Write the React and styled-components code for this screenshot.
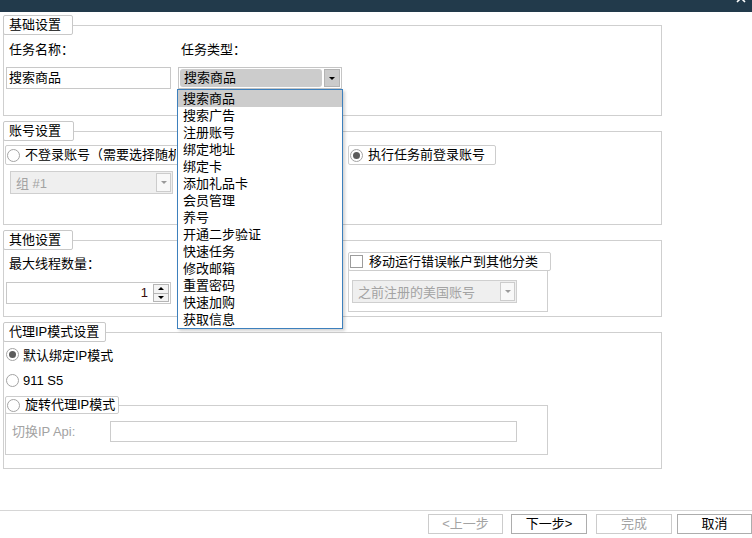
import React from "react";
import styled, { createGlobalStyle } from "styled-components";

const GlobalStyle = createGlobalStyle`
  html, body {
    margin: 0;
    padding: 0;
    background: #fff;
  }
  body {
    font-family: "Liberation Sans", "Noto Sans CJK SC", sans-serif;
    font-size: 13px;
    color: #000;
  }
  * {
    box-sizing: border-box;
  }
`;

const taskTypes = [
  "搜索商品",
  "搜索广告",
  "注册账号",
  "绑定地址",
  "绑定卡",
  "添加礼品卡",
  "会员管理",
  "养号",
  "开通二步验证",
  "快速任务",
  "修改邮箱",
  "重置密码",
  "快速加购",
  "获取信息",
];

function App() {
  return (
    <>
      <GlobalStyle />
      <Window>
        <TitleBar>
          <CloseGlyph width="10" height="12" viewBox="0 0 10 12">
            <path d="M1 1 L9 9 M9 1 L1 9" stroke="#fff" strokeWidth="1.6" />
          </CloseGlyph>
        </TitleBar>

        <Body>
          <Group $h={91} $pad="16px 0 0 2px">
            <Legend>基础设置</Legend>
            <Columns $cols="165px 164px" $gap="7px">
              <div>
                <FieldLabel>任务名称：</FieldLabel>
                <TextBox>搜索商品</TextBox>
              </div>
              <div>
                <FieldLabel>任务类型：</FieldLabel>
                <SelectWrap>
                  <ActiveSelect>
                    <ActiveValue>搜索商品</ActiveValue>
                    <ActiveArrow>
                      <Arrow />
                    </ActiveArrow>
                  </ActiveSelect>
                  <DropList>
                    {taskTypes.map((t, i) => (
                      <DropItem key={t} $active={i === 0}>
                        {t}
                      </DropItem>
                    ))}
                  </DropList>
                </SelectWrap>
              </div>
            </Columns>
          </Group>

          <Group $h={94} $pad="13px 0 0 1px">
            <Legend $pr={12}>账号设置</Legend>
            <Columns $cols="343px auto">
              <div>
                <OptionBox>
                  <Radio />
                  <ClippedText $w={151}>不登录账号（需要选择随机账号）</ClippedText>
                </OptionBox>
                <DisabledSelect $w={163} $mt={6} $ml={5}>
                  <span>组 #1</span>
                  <DisabledArrow>
                    <Arrow $grey />
                  </DisabledArrow>
                </DisabledSelect>
              </div>
              <div>
                <OptionBox>
                  <Radio $checked />
                  执行任务前登录账号
                </OptionBox>
              </div>
            </Columns>
          </Group>

          <Group $h={77} $pad="15px 0 0 2px">
            <Legend>其他设置</Legend>
            <Columns $cols="342px auto">
              <div>
                <FieldLabel $mb={10}>最大线程数量：</FieldLabel>
                <NumberBox>
                  <NumberValue>1</NumberValue>
                  <Spinner>
                    <SpinHalf>
                      <Arrow $up />
                    </SpinHalf>
                    <SpinHalf>
                      <Arrow />
                    </SpinHalf>
                  </Spinner>
                </NumberBox>
              </div>
              <SubFrame $w={200} $h={51} $mt={5} $pad="18px 0 0 3px">
                <FrameTitle>
                  <CheckBox />
                  移动运行错误帐户到其他分类
                </FrameTitle>
                <DisabledSelect $w={165}>
                  <span>之前注册的美国账号</span>
                  <DisabledArrow>
                    <Arrow $grey />
                  </DisabledArrow>
                </DisabledSelect>
              </SubFrame>
            </Columns>
          </Group>

          <Group $h={137} $pad="13px 0 0 1px">
            <Legend $pr={6}>代理IP模式设置</Legend>
            <RadioList>
              <RadioRow>
                <Radio $checked />
                默认绑定IP模式
              </RadioRow>
              <RadioRow>
                <Radio />
                911 S5
              </RadioRow>
            </RadioList>
            <SubFrame $w={543} $h={50} $mt={16} $pad="15px 0 0 6px">
              <FrameTitle $small>
                <Radio />
                旋转代理IP模式
              </FrameTitle>
              <ApiRow>
                <FieldLabel $muted $w={98}>
                  切换IP Api:
                </FieldLabel>
                <ApiInput />
              </ApiRow>
            </SubFrame>
          </Group>
        </Body>

        <Footer>
          <WizardButton $w={75} disabled>
            &lt;上一步
          </WizardButton>
          <WizardButton $w={76} $ml={8}>
            下一步&gt;
          </WizardButton>
          <WizardButton $w={76} $ml={9} disabled>
            完成
          </WizardButton>
          <WizardButton $w={75} $ml={5}>
            取消
          </WizardButton>
        </Footer>
      </Window>
    </>
  );
}

export default App;

const Window = styled.div`
  width: 752px;
  height: 538px;
  display: flex;
  flex-direction: column;
  background: #fff;
  overflow: hidden;
`;

const TitleBar = styled.div`
  height: 12px;
  flex-shrink: 0;
  background: #223a4b;
  display: flex;
  justify-content: flex-end;
  padding-right: 6px;
  overflow: hidden;
`;

const CloseGlyph = styled.svg`
  margin-top: -7px;
`;

const Body = styled.div`
  flex: 1;
  padding: 13px 0 0 3px;
  display: flex;
  flex-direction: column;
  gap: 15px;
`;

const Group = styled.div`
  position: relative;
  width: 659px;
  height: ${(p) => p.$h}px;
  border: 1px solid #cfcfcf;
  padding: ${(p) => p.$pad};
`;

const Legend = styled.div`
  position: absolute;
  top: -11px;
  left: -1px;
  height: 20px;
  padding: 0 ${(p) => p.$pr || 11}px 0 5px;
  line-height: 18px;
  background: #fff;
  border: 1px solid #c8c8c8;
  border-radius: 2px;
  white-space: nowrap;
`;

const Columns = styled.div`
  display: grid;
  grid-template-columns: ${(p) => p.$cols};
  column-gap: ${(p) => p.$gap || "0"};
  align-items: start;
`;

const FieldLabel = styled.div`
  padding-left: ${(p) => (p.$w ? 0 : 3)}px;
  width: ${(p) => (p.$w ? `${p.$w}px` : "auto")};
  flex-shrink: 0;
  line-height: 16px;
  margin-bottom: ${(p) => (p.$mb !== undefined ? p.$mb : 9)}px;
  color: ${(p) => (p.$muted ? "#a3a3a3" : "#000")};
  white-space: nowrap;
`;

const TextBox = styled.div`
  height: 22px;
  border: 1px solid #c8c8c8;
  padding-left: 2px;
  line-height: 20px;
  white-space: nowrap;
`;

const SelectWrap = styled.div`
  position: relative;
`;

const ActiveSelect = styled.div`
  height: 22px;
  border: 1px solid #c5c5c5;
  padding: 1px;
  display: flex;
  gap: 2px;
`;

const ActiveValue = styled.div`
  flex: 1;
  background: #cccccc;
  border-radius: 3px;
  padding-left: 4px;
  line-height: 18px;
  white-space: nowrap;
`;

const ActiveArrow = styled.div`
  width: 16px;
  background: #cbcbcb;
  border: 1px solid #b3b3b3;
  display: flex;
  align-items: center;
  justify-content: center;
`;

const Arrow = styled.span`
  width: 0;
  height: 0;
  border-left: 3px solid transparent;
  border-right: 3px solid transparent;
  ${(p) =>
    p.$up
      ? `border-bottom: 3px solid ${p.$grey ? "#9a9a9a" : "#000"};`
      : `border-top: 3px solid ${p.$grey ? "#9a9a9a" : "#000"};`}
`;

const DropList = styled.div`
  position: absolute;
  top: 22px;
  left: -1px;
  width: 166px;
  z-index: 10;
  background: #fff;
  border: 1px solid #3d80bd;
  box-shadow: 2px 2px 3px rgba(0, 0, 0, 0.18);
`;

const DropItem = styled.div`
  height: 17px;
  line-height: 17px;
  padding-left: 5px;
  background: ${(p) => (p.$active ? "#cccccc" : "transparent")};
  white-space: nowrap;
`;

const OptionBox = styled.div`
  display: inline-flex;
  align-items: center;
  gap: 5px;
  height: 20px;
  padding: 0 10px 0 1px;
  border: 1px solid #cdcdcd;
  border-radius: 2px;
  background: #fff;
  white-space: nowrap;
  line-height: 16px;
`;

const ClippedText = styled.span`
  display: inline-block;
  width: ${(p) => p.$w}px;
  overflow: hidden;
  white-space: nowrap;
`;

const Radio = styled.span`
  width: 13px;
  height: 13px;
  flex-shrink: 0;
  border-radius: 50%;
  border: 1px solid #a3a3a3;
  background: #fff;
  display: inline-flex;
  align-items: center;
  justify-content: center;
  &::after {
    content: "";
    width: 7px;
    height: 7px;
    border-radius: 50%;
    background: ${(p) => (p.$checked ? "#5c5c5c" : "transparent")};
  }
`;

const CheckBox = styled.span`
  width: 13px;
  height: 13px;
  flex-shrink: 0;
  border: 1px solid #9c9c9c;
  background: #fff;
`;

const DisabledSelect = styled.div`
  width: ${(p) => p.$w}px;
  height: 23px;
  margin-top: ${(p) => p.$mt || 0}px;
  margin-left: ${(p) => p.$ml || 0}px;
  border: 1px solid #cfcfcf;
  background: #efefef;
  color: #a3a3a3;
  display: flex;
  align-items: center;
  justify-content: space-between;
  padding: 1px 1px 1px 5px;
  white-space: nowrap;
`;

const DisabledArrow = styled.div`
  width: 15px;
  height: 100%;
  background: #f8f8f8;
  border: 1px solid #cccccc;
  display: flex;
  align-items: center;
  justify-content: center;
`;

const NumberBox = styled.div`
  width: 165px;
  height: 22px;
  border: 1px solid #c8c8c8;
  display: flex;
  align-items: center;
  justify-content: flex-end;
  padding: 1px;
`;

const NumberValue = styled.span`
  color: #3a0d0d;
  margin-right: 5px;
  line-height: 16px;
`;

const Spinner = styled.div`
  width: 16px;
  height: 100%;
  display: flex;
  flex-direction: column;
`;

const SpinHalf = styled.div`
  flex: 1;
  border: 1px solid #b5b5b5;
  background: #f4f4f4;
  display: flex;
  align-items: center;
  justify-content: center;
  & + & {
    border-top: none;
  }
`;

const SubFrame = styled.div`
  position: relative;
  width: ${(p) => p.$w}px;
  height: ${(p) => p.$h}px;
  margin-top: ${(p) => p.$mt}px;
  border: 1px solid #cfcfcf;
  padding: ${(p) => p.$pad};
`;

const FrameTitle = styled(OptionBox)`
  position: absolute;
  top: -10px;
  left: -1px;
  height: ${(p) => (p.$small ? 18 : 19)}px;
  padding-right: ${(p) => (p.$small ? 3 : 12)}px;
  gap: ${(p) => (p.$small ? 5 : 6)}px;
`;

const RadioList = styled.div`
  display: flex;
  flex-direction: column;
  gap: 9px;
`;

const RadioRow = styled.div`
  display: flex;
  align-items: center;
  gap: 4px;
  height: 17px;
  padding-left: 1px;
  white-space: nowrap;
`;

const ApiRow = styled.div`
  display: flex;
  align-items: center;
  & > div {
    margin-bottom: 0;
  }
`;

const ApiInput = styled.div`
  width: 407px;
  height: 21px;
  border: 1px solid #cccccc;
  background: #fff;
`;

const Footer = styled.div`
  height: 28px;
  flex-shrink: 0;
  border-top: 1px solid #d6d6d6;
  display: flex;
  justify-content: flex-end;
  padding-top: 3px;
`;

const WizardButton = styled.button`
  width: ${(p) => p.$w}px;
  height: 20px;
  margin-left: ${(p) => p.$ml || 0}px;
  padding: 0;
  font-family: "Liberation Sans", "Noto Sans CJK SC", sans-serif;
  font-size: 13px;
  line-height: 16px;
  background: #fff;
  color: #000;
  border: 1px solid #adadad;
  border-radius: 0;
  &:disabled {
    color: #a3a3a3;
    border-color: #cccccc;
  }
`;
